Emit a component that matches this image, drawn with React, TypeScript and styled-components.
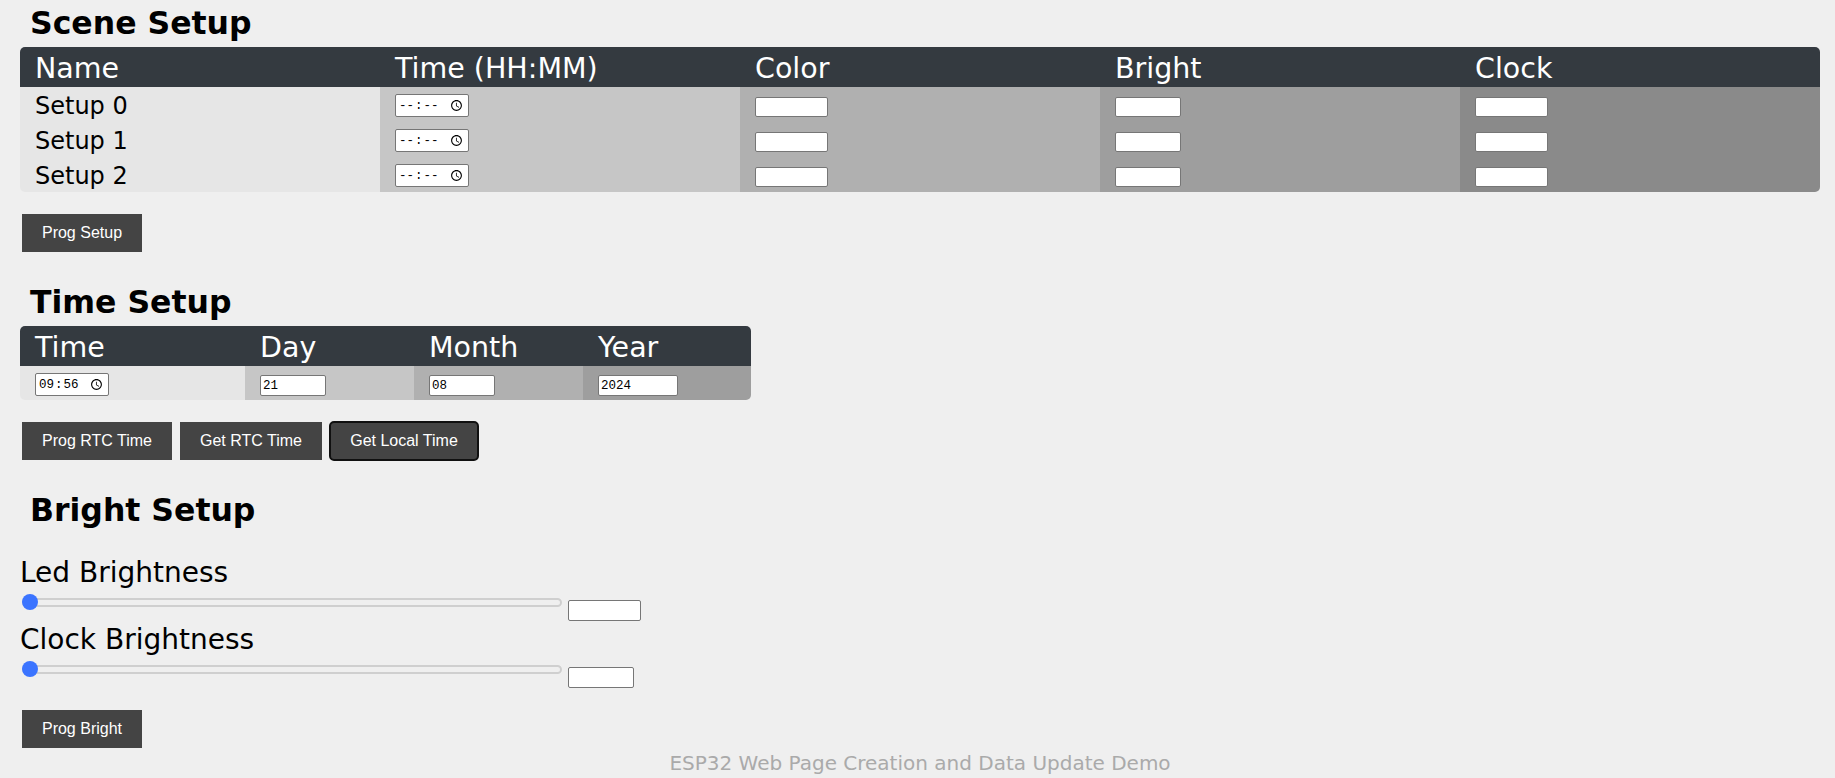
import React from 'react'
import styled, { createGlobalStyle } from 'styled-components'

const GlobalStyle = createGlobalStyle`
    html, body {
        margin: 0;
        padding: 0;
        background: #efefef;
        font-family: 'DejaVu Sans', Verdana, sans-serif;
        color: #000;
    }
`

const sceneShades = ['#e6e6e6', '#c6c6c6', '#b0b0b0', '#9e9e9e', '#8a8a8a']
const setups = ['Setup 0', 'Setup 1', 'Setup 2']

export default function App() {
    return (
        <Page>
            <GlobalStyle />
            <Heading>Scene Setup</Heading>
            <DataTable $width={1800}>
                <colgroup>
                    <Col $width={360} />
                    <Col $width={360} />
                    <Col $width={360} />
                    <Col $width={360} />
                    <Col $width={360} />
                </colgroup>
                <thead>
                    <tr>
                        <HeadCell>Name</HeadCell>
                        <HeadCell>Time (HH:MM)</HeadCell>
                        <HeadCell>Color</HeadCell>
                        <HeadCell>Bright</HeadCell>
                        <HeadCell>Clock</HeadCell>
                    </tr>
                </thead>
                <tbody>
                    {setups.map((name) => (
                        <tr key={name}>
                            <NameCell $shade={sceneShades[0]}>{name}</NameCell>
                            <FieldCell $shade={sceneShades[1]} $height={35} $gap={5}>
                                <TimeField type="time" />
                            </FieldCell>
                            <FieldCell $shade={sceneShades[2]} $height={35} $gap={5}>
                                <TextField $width={73} $height={20} />
                            </FieldCell>
                            <FieldCell $shade={sceneShades[3]} $height={35} $gap={5}>
                                <TextField $width={66} $height={20} />
                            </FieldCell>
                            <FieldCell $shade={sceneShades[4]} $height={35} $gap={5}>
                                <TextField $width={73} $height={20} />
                            </FieldCell>
                        </tr>
                    ))}
                </tbody>
            </DataTable>
            <ButtonRow>
                <ActionButton $width={120}>Prog Setup</ActionButton>
            </ButtonRow>

            <Heading>Time Setup</Heading>
            <DataTable $width={731}>
                <colgroup>
                    <Col $width={225} />
                    <Col $width={169} />
                    <Col $width={169} />
                    <Col $width={168} />
                </colgroup>
                <thead>
                    <tr>
                        <HeadCell>Time</HeadCell>
                        <HeadCell>Day</HeadCell>
                        <HeadCell>Month</HeadCell>
                        <HeadCell>Year</HeadCell>
                    </tr>
                </thead>
                <tbody>
                    <tr>
                        <FieldCell $shade={sceneShades[0]} $height={34} $gap={4}>
                            <TimeField type="time" defaultValue="09:56" />
                        </FieldCell>
                        <FieldCell $shade={sceneShades[1]} $height={34} $gap={4}>
                            <TextField $width={66} $height={21} defaultValue="21" />
                        </FieldCell>
                        <FieldCell $shade={sceneShades[2]} $height={34} $gap={4}>
                            <TextField $width={66} $height={21} defaultValue="08" />
                        </FieldCell>
                        <FieldCell $shade={sceneShades[3]} $height={34} $gap={4}>
                            <TextField $width={80} $height={21} defaultValue="2024" />
                        </FieldCell>
                    </tr>
                </tbody>
            </DataTable>
            <ButtonRow>
                <ActionButton $width={150}>Prog RTC Time</ActionButton>
                <ActionButton $width={142}>Get RTC Time</ActionButton>
                <ActionButton $width={148} $focused>Get Local Time</ActionButton>
            </ButtonRow>

            <Heading>Bright Setup</Heading>
            <SliderBlock>
                <SliderLabel>Led Brightness</SliderLabel>
                <SliderRow>
                    <Slider type="range" min={0} max={100} defaultValue={0} />
                    <SliderValue $width={73} $height={21} />
                </SliderRow>
                <SliderLabel>Clock Brightness</SliderLabel>
                <SliderRow>
                    <Slider type="range" min={0} max={100} defaultValue={0} />
                    <SliderValue $width={66} $height={21} />
                </SliderRow>
            </SliderBlock>
            <BrightButtons>
                <ActionButton $width={120}>Prog Bright</ActionButton>
            </BrightButtons>
            <Footer>ESP32 Web Page Creation and Data Update Demo</Footer>
        </Page>
    )
}

const Page = styled.div`
    width: 1835px;
    height: 778px;
    overflow: hidden;
`

const Heading = styled.h2`
    margin: 0 0 0 30px;
    height: 47px;
    font-size: 31.5px;
    line-height: 47px;
    font-weight: 700;
`

const DataTable = styled.table<{ $width: number }>`
    margin-left: 20px;
    width: ${(p) => p.$width}px;
    table-layout: fixed;
    border-collapse: separate;
    border-spacing: 0;
    border-radius: 5px;
    overflow: hidden;
`

const Col = styled.col<{ $width: number }>`
    width: ${(p) => p.$width}px;
`

const HeadCell = styled.th`
    box-sizing: border-box;
    height: 40px;
    padding: 4px 15px 0;
    background: #343a40;
    color: #fff;
    font-size: 28.5px;
    line-height: 36px;
    font-weight: 400;
    text-align: left;
`

const NameCell = styled.td<{ $shade: string }>`
    box-sizing: border-box;
    height: 35px;
    padding: 4px 15px 0;
    background: ${(p) => p.$shade};
    font-size: 24px;
    line-height: 31px;
`

const FieldCell = styled.td<{ $shade: string; $height: number; $gap: number }>`
    box-sizing: border-box;
    height: ${(p) => p.$height}px;
    padding: 0 15px ${(p) => p.$gap}px;
    background: ${(p) => p.$shade};
    vertical-align: bottom;
`

const TimeField = styled.input`
    display: block;
    box-sizing: border-box;
    width: 74px;
    height: 23px;
    padding: 1px 2px;
    border: 1px solid #767676;
    border-radius: 2px;
    background: #fff;
    font-family: 'Liberation Mono', monospace;
    font-size: 12.5px;
`

const TextField = styled.input<{ $width: number; $height: number }>`
    display: block;
    box-sizing: border-box;
    width: ${(p) => p.$width}px;
    height: ${(p) => p.$height}px;
    padding: 1px 2px;
    border: 1px solid #767676;
    border-radius: 2px;
    background: #fff;
    font-family: 'Liberation Mono', monospace;
    font-size: 12.5px;
`

const ButtonRow = styled.div`
    display: flex;
    gap: 8px;
    margin: 22px 0 27px 22px;
`

const BrightButtons = styled(ButtonRow)`
    margin: 26px 0 0 22px;
`

const ActionButton = styled.button<{ $width: number; $focused?: boolean }>`
    width: ${(p) => p.$width}px;
    height: 38px;
    padding: 0;
    border: none;
    background: #444;
    color: #fff;
    font-family: 'Liberation Sans', Arial, sans-serif;
    font-size: 16px;
    ${(p) => p.$focused && 'outline: 2px solid #101010; outline-offset: -1px; border-radius: 4px; box-shadow: 0 0 0 1px #fff;'}
`

const SliderBlock = styled.div`
    margin-left: 20px;
    padding-top: 16px;
`

const SliderLabel = styled.div`
    height: 42px;
    padding-top: 3px;
    box-sizing: border-box;
    font-size: 28px;
    line-height: 39px;
`

const SliderRow = styled.div`
    display: flex;
    align-items: flex-start;
    height: 25px;
`

const Slider = styled.input`
    appearance: none;
    width: 540px;
    height: 17px;
    margin: 2px 6px 0 2px;
    background: transparent;

    &::-webkit-slider-runnable-track {
        box-sizing: border-box;
        height: 9px;
        border: 2px solid #cfcfcf;
        border-radius: 5px;
        background: #efefef;
    }

    &::-webkit-slider-thumb {
        appearance: none;
        width: 16px;
        height: 16px;
        margin-top: -6px;
        margin-left: -2px;
        border-radius: 50%;
        background: #3b74ff;
    }
`

const SliderValue = styled(TextField)`
    margin-top: 8px;
`

const Footer = styled.div`
    margin-top: 3px;
    width: 1840px;
    text-align: center;
    color: #aaa;
    font-size: 20px;
    line-height: 24px;
`
